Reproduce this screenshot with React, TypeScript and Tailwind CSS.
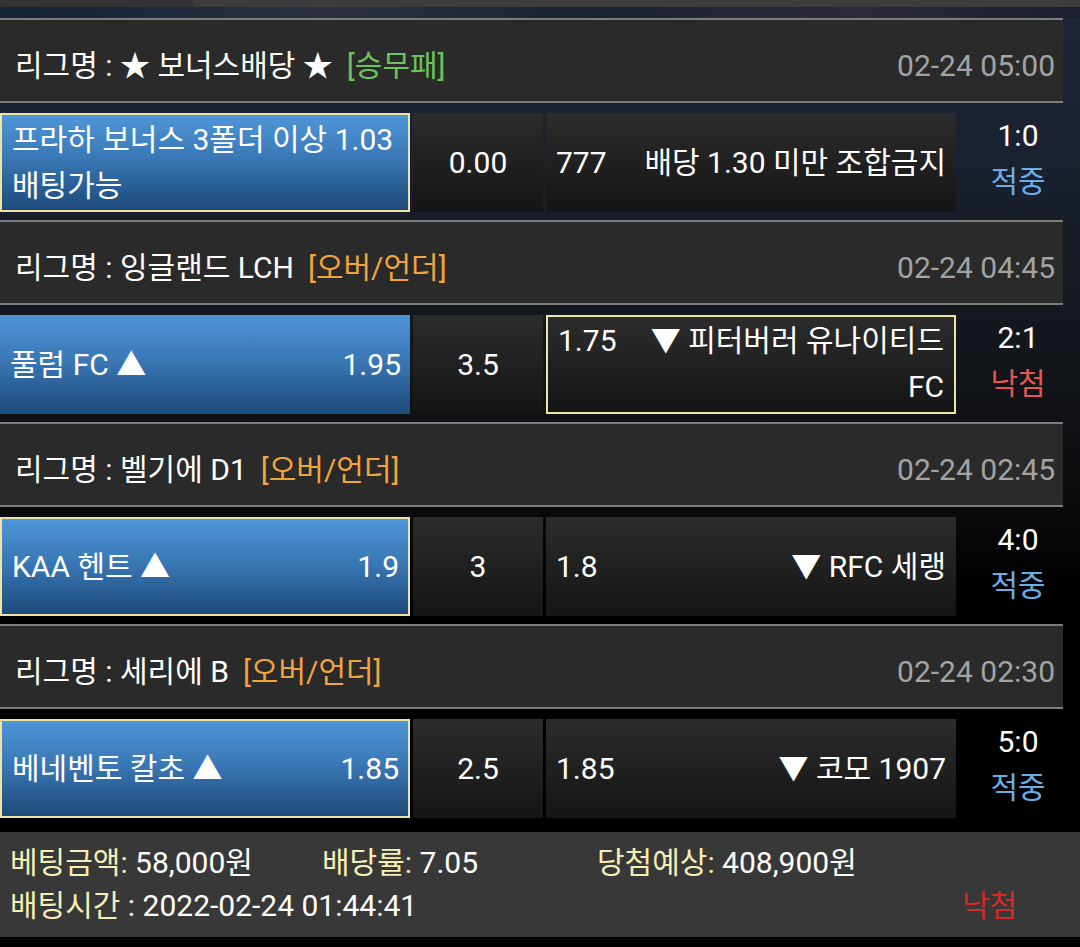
import React from "react"

type Bet = {
  league: string
  tag: string
  tagColor: string
  time: string
  home: React.ReactNode
  homeOdds?: string
  mid: string
  awayOdds: string
  away: React.ReactNode
  pick: "home" | "away"
  score: string
  result: "적중" | "낙첨"
}

const bets: Bet[] = [
  {
    league: "★ 보너스배당 ★",
    tag: "[승무패]",
    tagColor: "text-[#6cc35a]",
    time: "02-24 05:00",
    home: (
      <>
        프라하 보너스 3폴더 이상 1.03
        <br />
        배팅가능
      </>
    ),
    mid: "0.00",
    awayOdds: "777",
    away: "배당 1.30 미만 조합금지",
    pick: "home",
    score: "1:0",
    result: "적중",
  },
  {
    league: "잉글랜드 LCH",
    tag: "[오버/언더]",
    tagColor: "text-[#f0a43c]",
    time: "02-24 04:45",
    home: "풀럼 FC ▲",
    homeOdds: "1.95",
    mid: "3.5",
    awayOdds: "1.75",
    away: (
      <>
        ▼ 피터버러 유나이티드
        <br />
        FC
      </>
    ),
    pick: "away",
    score: "2:1",
    result: "낙첨",
  },
  {
    league: "벨기에 D1",
    tag: "[오버/언더]",
    tagColor: "text-[#f0a43c]",
    time: "02-24 02:45",
    home: "KAA 헨트 ▲",
    homeOdds: "1.9",
    mid: "3",
    awayOdds: "1.8",
    away: "▼ RFC 세랭",
    pick: "home",
    score: "4:0",
    result: "적중",
  },
  {
    league: "세리에 B",
    tag: "[오버/언더]",
    tagColor: "text-[#f0a43c]",
    time: "02-24 02:30",
    home: "베네벤토 칼초 ▲",
    homeOdds: "1.85",
    mid: "2.5",
    awayOdds: "1.85",
    away: "▼ 코모 1907",
    pick: "home",
    score: "5:0",
    result: "적중",
  },
]

function BetBlock({ bet }: { bet: Bet }) {
  return (
    <div>
      {/* League header */}
      <div className="w-[1063px] h-[85px] border-y-2 border-[#7d7d7d] bg-[#2a2a2a] flex items-center justify-between pl-[15px] pr-[8px] pt-[10px]">
        <div className="flex items-center text-white">
          <span>리그명 : {bet.league}</span>
          <span className={`ml-[14px] ${bet.tagColor}`}>{bet.tag}</span>
        </div>
        <span className="text-[#a3a3a3]">{bet.time}</span>
      </div>

      {/* Bet row */}
      <div className="mt-[10px] mb-[8px] h-[99px] flex gap-[3px] leading-[46px]">
        <div
          className={`w-[410px] flex items-center justify-between pl-[10px] pr-[9px] bg-[linear-gradient(180deg,#4e96d8_0%,#3a78b6_45%,#1d4a7a_100%)] text-white ${
            bet.pick === "home" ? "border-2 border-[#efe3a6]" : ""
          }`}
        >
          <div>{bet.home}</div>
          {bet.homeOdds && <div>{bet.homeOdds}</div>}
        </div>
        <div className="w-[130px] flex items-center justify-center bg-[linear-gradient(180deg,#2c2c2c_0%,#151515_100%)] text-white">
          {bet.mid}
        </div>
        <div
          className={`w-[410px] flex justify-between pl-[10px] pr-[10px] bg-[linear-gradient(180deg,#2c2c2c_0%,#151515_100%)] text-white ${
            bet.pick === "away" ? "border-2 border-[#efe3a6] items-start pt-[1px]" : "items-center"
          }`}
        >
          <div>{bet.awayOdds}</div>
          <div className="text-right">{bet.away}</div>
        </div>
        <div className="w-[118px] flex flex-col items-center justify-center pb-[8px]">
          <span className="text-white">{bet.score}</span>
          <span className={bet.result === "적중" ? "text-[#6aaee6]" : "text-[#e65454]"}>{bet.result}</span>
        </div>
      </div>
    </div>
  )
}

export default function App() {
  return (
    <div className="w-[1080px] h-[947px] overflow-hidden bg-black font-[Roboto,'Noto_Sans_CJK_KR',sans-serif] text-[30px] leading-[36px]">
      {/* Top bar */}
      <div className="flex h-[7px]">
        <div className="w-[193px] bg-[#333333]" />
        <div className="flex-1 bg-[#3d3d3d]" />
      </div>

      <div className="bg-[linear-gradient(180deg,#1f2838_0%,#1a2130_18%,#121519_45%,#0a0a0c_62%,#000_72%)]">
        <div className="h-[11px] bg-[linear-gradient(90deg,#15223a_0%,#2a3040_30%,#1b2433_55%,#2c2a38_80%,#1a2030_100%)]" />
        {bets.map((b, i) => (
          <BetBlock key={i} bet={b} />
        ))}
      </div>

      {/* Summary */}
      <div className="mt-[14px] h-[105px] bg-[#383838] pl-[10px] pt-[9px] leading-[43px]">
        <div className="flex">
          <div className="w-[312px]">
            <span className="text-[#f5efb6]">베팅금액:</span>
            <span className="text-white"> 58,000원</span>
          </div>
          <div className="w-[275px]">
            <span className="text-[#f5efb6]">배당률:</span>
            <span className="text-white"> 7.05</span>
          </div>
          <div>
            <span className="text-[#f5efb6]">당첨예상:</span>
            <span className="text-white"> 408,900원</span>
          </div>
        </div>
        <div className="flex">
          <div className="w-[952px]">
            <span className="text-[#f5efb6]">배팅시간</span>
            <span className="text-white"> : 2022-02-24 01:44:41</span>
          </div>
          <span className="text-[#d42a2a]">낙첨</span>
        </div>
      </div>
    </div>
  )
}
